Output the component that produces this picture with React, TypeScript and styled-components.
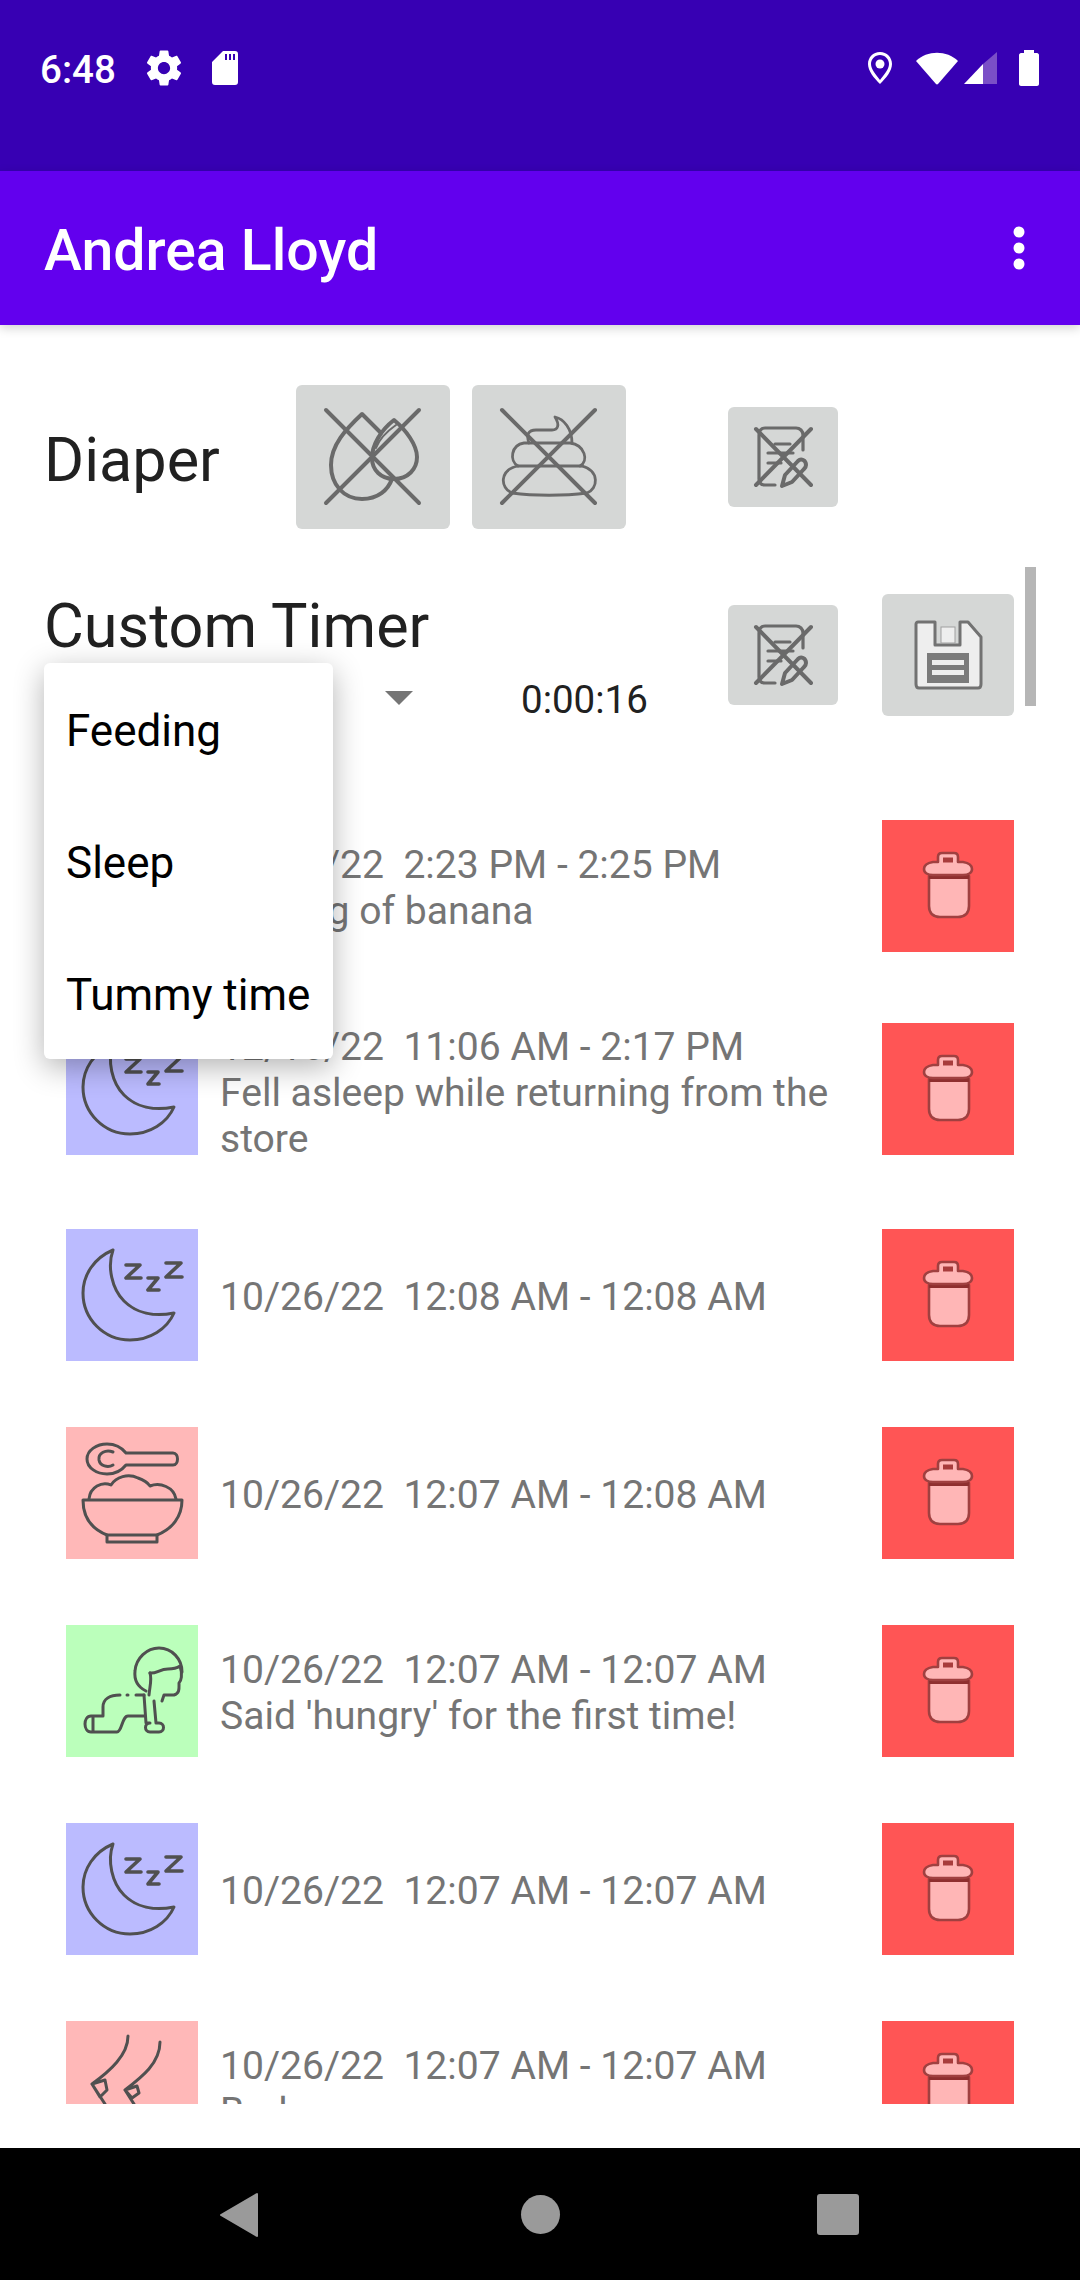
import React from 'react';
import styled, { createGlobalStyle } from 'styled-components';

const GlobalStyle = createGlobalStyle`
  html, body {
    margin: 0;
    padding: 0;
    background: #fff;
    font-family: Roboto, "Noto Sans", sans-serif;
  }
`;

const Screen = styled.div`
  position: relative;
  width: 1080px;
  height: 2280px;
  display: flex;
  flex-direction: column;
  overflow: hidden;
  background: #fff;
`;

const StatusBar = styled.div`
  height: 171px;
  flex: none;
  background: #3700b3;
  display: flex;
  align-items: flex-start;
  justify-content: space-between;
  padding: 50px 41px 0 40px;
  box-sizing: border-box;
  color: #fff;
`;

const StatusGroup = styled.div`
  height: 36px;
  display: flex;
  align-items: center;
`;

const Clock = styled.span`
  font-size: 38.5px;
  font-weight: 500;
  line-height: 36px;
  width: 103px;
  margin-top: 3px;
`;

const AppBar = styled.div`
  height: 154px;
  flex: none;
  background: #6200ee;
  display: flex;
  align-items: center;
  justify-content: space-between;
  padding: 0 41px 0 44px;
  box-sizing: border-box;
  box-shadow: 0 3px 10px rgba(0, 0, 0, 0.18);
  position: relative;
  z-index: 2;
`;

const AppTitle = styled.h1`
  margin: 5px 0 0;
  font-size: 57.2px;
  font-weight: 500;
  color: #fff;
`;

const Main = styled.main`
  flex: 1;
  position: relative;
  overflow: hidden;
`;

const DiaperRow = styled.section`
  display: flex;
  align-items: center;
  height: 144px;
  margin-top: 60px;
  padding-left: 44px;
`;

const SectionLabel = styled.h2`
  margin: 0;
  font-size: 61.2px;
  font-weight: 400;
  color: #212121;
  white-space: nowrap;
`;

const DiaperLabel = styled(SectionLabel)`
  width: 252px;
  margin-top: 5px;
`;

const IconButton = styled.div<{ $w: number; $h: number; $ml?: number }>`
  width: ${p => p.$w}px;
  height: ${p => p.$h}px;
  margin-left: ${p => p.$ml ?? 0}px;
  flex: none;
  background: #d5d7d6;
  border-radius: 6px;
  svg {
    display: block;
    width: 100%;
    height: 100%;
  }
`;

const TimerSection = styled.section`
  display: flex;
  align-items: flex-start;
  margin-top: 65px;
  padding-left: 44px;
  height: 122px;
`;

const TimerLeft = styled.div`
  width: 684px;
  flex: none;
  margin-top: -4px;
`;

const TimerControls = styled.div`
  display: flex;
  align-items: center;
  margin-top: 11px;
  height: 50px;
`;

const SpinnerArrow = styled.div`
  margin-left: 341px;
  width: 0;
  height: 0;
  border-left: 14px solid transparent;
  border-right: 14px solid transparent;
  border-top: 14px solid #757575;
`;

const TimerValue = styled.span`
  margin-left: 108px;
  margin-top: 3px;
  font-size: 38.5px;
  color: #212121;
`;

const EditHolder = styled.div`
  margin-top: 11px;
`;

const ScrollThumb = styled.div`
  position: absolute;
  left: 1025px;
  top: 242px;
  width: 11px;
  height: 139px;
  background: #b6b6b6;
`;

const List = styled.div`
  height: 1284px;
  margin-top: 104px;
  overflow: hidden;
  padding-left: 66px;
`;

const Row = styled.div<{ $height: number }>`
  display: flex;
  height: ${p => p.$height}px;
`;

const Tile = styled.div<{ $color: string }>`
  width: 132px;
  height: 132px;
  flex: none;
  background: ${p => p.$color};
  svg {
    display: block;
    width: 132px;
    height: 132px;
  }
`;

const RowText = styled.div<{ $nudge: number }>`
  width: 662px;
  height: 132px;
  flex: none;
  margin: ${p => p.$nudge}px 0 0 22px;
  display: flex;
  flex-direction: column;
  justify-content: center;
  font-size: 39.1px;
  line-height: 46px;
  color: #757575;
  white-space: pre-wrap;
`;

const Menu = styled.div`
  position: absolute;
  left: 44px;
  top: 338px;
  width: 289px;
  background: #fff;
  border-radius: 6px;
  box-shadow: 0 8px 30px rgba(0, 0, 0, 0.3);
  z-index: 3;
`;

const MenuItem = styled.div`
  height: 132px;
  box-sizing: border-box;
  display: flex;
  align-items: center;
  padding: 3px 0 0 22px;
  font-size: 44px;
  color: #000;
`;

const NavBar = styled.div`
  height: 132px;
  flex: none;
  background: #000;
  svg {
    display: block;
  }
`;

const LineIcon = styled.svg`
  fill: none;
  stroke: #6a6a6a;
  stroke-width: 4;
  stroke-linecap: round;
  stroke-linejoin: round;
`;

const TileIcon = styled.svg`
  fill: none;
  stroke: #505050;
  stroke-width: 3;
  stroke-linecap: round;
  stroke-linejoin: round;
`;

const MoonIcon = () => (
  <TileIcon viewBox="0 0 132 132">
    <path d="M47 21C28 29 17 46 17 64C17 90 38 111 64 111C84 111 101 100 108 84C88 88 70 84 58 72C46 60 41 38 47 21Z" />
    <path d="M60 36H74L60 49H75M82 49H92L82 61H93M100 34H115L100 48H116" strokeWidth="3.6" />
  </TileIcon>
);

const FoodIcon = () => (
  <TileIcon viewBox="0 0 132 132">
    <path d="M21 32C21 23 31 17 41 17C50 17 56 21 60 26H107C113 26 113 38 107 38H60C56 43 50 47 41 47C31 47 21 41 21 32Z" />
    <path d="M47 25C40 22 32 26 33 33C34 39 42 41 47 38" />
    <path d="M23 72C24 60 36 54 45 58C50 50 62 46 72 51C78 53 82 56 84 59C94 55 108 60 110 72" />
    <path d="M17 73H116C116 90 106 102 91 108H41C26 102 17 90 17 73Z" />
    <path d="M41 108V115H91V108" />
  </TileIcon>
);

const TummyIcon = () => (
  <TileIcon viewBox="0 0 132 132">
    <path d="M80 66C72 62 68 55 69 46C70 33 81 23 93 23C106 23 116 34 116 47" />
    <path d="M84 48C90 49 94 44 102 44C107 44 111 43 114 41C117 50 115 56 113 58C113 63 114 68 108 70H98L96 76" />
    <path d="M84 48C86 54 84 60 83 70" />
    <path d="M54 70C44 70 37 74 37 82V91H25C17 91 17 107 25 107H51C56 107 56 91 62 91H78" />
    <path d="M61 70H62M70 70H78" />
    <path d="M78 70L80 98H84C78 98 78 107 84 107H93C99 107 99 98 93 98H90L88 76" />
    <path d="M27 92V106" />
  </TileIcon>
);

const FeetIcon = () => (
  <TileIcon viewBox="0 0 132 132">
    <path d="M62 15C62 34 44 50 26 63L39 59L41 69L34 76L26 63L39 83L42 90" />
    <path d="M94 21C94 42 76 56 59 69L71 65L73 72L66 77L59 69L68 83L71 90" />
  </TileIcon>
);

const TrashIcon = () => (
  <svg viewBox="0 0 132 132">
    <g fill="#ffb6b6" stroke="#a04040" strokeWidth="2.6" strokeLinejoin="round">
      <path d="M47 56V86C47 94 52 97 58 97H76C82 97 87 94 87 86V56Z" />
      <path d="M47 57H87" stroke="#8f2f2f" strokeWidth="4" />
      <path d="M56 42V37C56 34 58 33 60 33H72C74 33 76 34 76 37V42H81C87 43 90 46 90 49C90 53 86 55 81 55H51C46 55 42 53 42 49C42 46 45 43 51 42Z" />
    </g>
    <rect x="61" y="37.500" width="10" height="5" fill="#a83c3c" />
  </svg>
);

const DropCrossIcon = () => (
  <LineIcon viewBox="0 0 154 144">
    <path d="M30 25L123 118M123 25L30 118" />
    <path d="M85 48L66 29C50 44 35 60 35 80C35 100 48 114 66 114C82 114 92 105 96 94" />
    <path d="M98 35C85 45 76 60 76 73C76 85 85 94 98 94C112 94 121 84 121 72C121 60 110 45 98 35Z" />
    <path d="M100 40C90 47 83 55 80 63" strokeWidth="2" />
  </LineIcon>
);

const PoopCrossIcon = () => (
  <LineIcon viewBox="0 0 154 144">
    <path d="M30 25L123 118M123 25L30 118" />
    <g strokeWidth="2.8">
      <path d="M40 108C62 111 92 111 115 108C126 104 128 86 110 81" />
      <path d="M40 108C28 103 27 85 46 81H110" />
      <path d="M46 81C37 76 39 60 52 58H98C113 60 117 76 108 81" />
      <path d="M57 58C54 50 56 45 64 45H80C86 45 88 40 83 32C92 34 100 44 100 58" />
    </g>
  </LineIcon>
);

const EditCrossIcon = () => (
  <LineIcon viewBox="0 0 110 100" strokeWidth={2.2}>
    <path d="M28 22L83 78M83 22L28 78" />
    <path d="M75 43V28C75 24 72 21 68 21H37C33 21 31 24 31 28V72C31 76 33 78 37 78H47" strokeWidth="3.2" />
    <path d="M47 37H62M40 46H65M40 56H53" strokeWidth="3.2" />
    <path d="M54 79L57 68L70 54C73 51 78 53 78 58C78 60 77 61 76 62L64 75Z" strokeWidth="4" />
  </LineIcon>
);

const SaveIcon = () => (
  <svg viewBox="0 0 132 122">
    <path d="M36 28H53V51H78V28H86L99 43V90C99 92 98 94 96 94H37C35 94 34 92 34 90V30C34 29 35 28 36 28Z" fill="#eee" stroke="#727272" strokeWidth="3" strokeLinejoin="round" />
    <rect x="59" y="33" width="14" height="16" fill="#eee" stroke="#a0a0a0" strokeWidth="1" />
    <rect x="45" y="59" width="42" height="30" fill="#7b7b7b" />
    <rect x="50" y="66" width="32" height="5" fill="#eee" />
    <rect x="50" y="76" width="32" height="5" fill="#eee" />
  </svg>
);

type Entry = {
  height: number;
  color: string;
  icon: React.ReactNode;
  text: string;
  nudge: number;
};

const SLEEP = '#bbbbff';
const FOOD = '#ffb8b8';
const TUMMY = '#bbffbb';

const entries: Entry[] = [
  { height: 203, color: FOOD, icon: <FoodIcon />, nudge: 2, text: '12/16/22  2:23 PM - 2:25 PM\nServing of banana' },
  { height: 206, color: SLEEP, icon: <MoonIcon />, nudge: 4, text: '12/16/22  11:06 AM - 2:17 PM\nFell asleep while returning from the store' },
  { height: 198, color: SLEEP, icon: <MoonIcon />, nudge: 2, text: '10/26/22  12:08 AM - 12:08 AM' },
  { height: 198, color: FOOD, icon: <FoodIcon />, nudge: 2, text: '10/26/22  12:07 AM - 12:08 AM' },
  { height: 198, color: TUMMY, icon: <TummyIcon />, nudge: 2, text: "10/26/22  12:07 AM - 12:07 AM\nSaid 'hungry' for the first time!" },
  { height: 198, color: SLEEP, icon: <MoonIcon />, nudge: 2, text: '10/26/22  12:07 AM - 12:07 AM' },
  { height: 198, color: FOOD, icon: <FeetIcon />, nudge: 2, text: '10/26/22  12:07 AM - 12:07 AM\nBad' },
];

export default function App() {
  return (
    <Screen>
      <GlobalStyle />
      <StatusBar>
        <StatusGroup>
          <Clock>6:48</Clock>
          <svg width="42" height="42" viewBox="0 0 24 24" fill="#fff">
            <path
              fillRule="evenodd"
              d="M19.43 12.98c.04-.32.07-.64.07-.98s-.03-.66-.07-.98l2.11-1.65c.19-.15.24-.42.12-.64l-2-3.46c-.12-.22-.39-.3-.61-.22l-2.49 1c-.52-.4-1.08-.73-1.69-.98l-.38-2.65C14.46 2.18 14.25 2 14 2h-4c-.25 0-.46.18-.49.42l-.38 2.65c-.61.25-1.17.59-1.69.98l-2.49-1c-.23-.09-.49 0-.61.22l-2 3.46c-.13.22-.07.49.12.64l2.11 1.65c-.04.32-.07.65-.07.98s.03.66.07.98l-2.11 1.65c-.19.15-.24.42-.12.64l2 3.46c.12.22.39.3.61.22l2.49-1c.52.4 1.08.73 1.69.98l.38 2.65c.03.24.24.42.49.42h4c.25 0 .46-.18.49-.42l.38-2.65c.61-.25 1.17-.59 1.69-.98l2.49 1c.23.09.49 0 .61-.22l2-3.46c.12-.22.07-.49-.12-.64l-2.11-1.65zM12 15.5c-1.93 0-3.5-1.57-3.5-3.5s1.57-3.5 3.5-3.5 3.5 1.57 3.5 3.5-1.57 3.5-3.5 3.5z"
            />
          </svg>
          <svg width="28" height="36" viewBox="0 0 28 36" style={{ marginLeft: 26 }}>
            <path
              fillRule="evenodd"
              fill="#fff"
              d="M12 1H24C26 1 27 2 27 4V32C27 34 26 35 24 35H4C2 35 1 34 1 32V12ZM14 4V10H16V4ZM18 4V10H20V4ZM22 4V10H24V4Z"
            />
          </svg>
        </StatusGroup>
        <StatusGroup>
          <svg width="26" height="34" viewBox="0 0 26 34">
            <path fillRule="evenodd" fill="#fff" d="M13 1C6 1 1 6.500 1 13C1 20 7 27 13 33C19 27 25 20 25 13C25 6.500 20 1 13 1ZM13 4C18 4 22 8 22 13C22 18 17 24 13 29C9 24 4 18 4 13C4 8 8 4 13 4Z" />
            <circle cx="13" cy="13" r="4.500" fill="#fff" />
          </svg>
          <svg width="44" height="34" viewBox="0 0 44 34" style={{ marginLeft: 22 }}>
            <path fill="#fff" d="M1 10C12 -1 32 -1 43 10L23 33C22.500 33.500 21.500 33.500 21 33Z" />
          </svg>
          <svg width="34" height="34" viewBox="0 0 34 34" style={{ marginLeft: 5 }}>
            <path fill="#7a4fc7" d="M19 13L33 1V33H19Z" />
            <path fill="#fff" d="M0 33L19 13V33Z" />
          </svg>
          <svg width="20" height="36" viewBox="0 0 20 36" style={{ marginLeft: 21 }}>
            <path fill="#fff" d="M5 0H15V3H18C19 3 20 4 20 5V34C20 35 19 36 18 36H2C1 36 0 35 0 34V5C0 4 1 3 2 3H5Z" />
          </svg>
        </StatusGroup>
      </StatusBar>

      <AppBar>
        <AppTitle>Andrea Lloyd</AppTitle>
        <svg width="12" height="44" viewBox="0 0 12 44" fill="#fff" style={{ marginRight: 14 }}>
          <circle cx="6" cy="6" r="5.500" />
          <circle cx="6" cy="22" r="5.500" />
          <circle cx="6" cy="38" r="5.500" />
        </svg>
      </AppBar>

      <Main>
        <DiaperRow>
          <DiaperLabel>Diaper</DiaperLabel>
          <IconButton $w={154} $h={144}><DropCrossIcon /></IconButton>
          <IconButton $w={154} $h={144} $ml={22}><PoopCrossIcon /></IconButton>
          <IconButton $w={110} $h={100} $ml={102}><EditCrossIcon /></IconButton>
        </DiaperRow>

        <TimerSection>
          <TimerLeft>
            <SectionLabel>Custom Timer</SectionLabel>
            <TimerControls>
              <SpinnerArrow />
              <TimerValue>0:00:16</TimerValue>
            </TimerControls>
          </TimerLeft>
          <EditHolder>
            <IconButton $w={110} $h={100}><EditCrossIcon /></IconButton>
          </EditHolder>
          <IconButton $w={132} $h={122} $ml={44}><SaveIcon /></IconButton>
        </TimerSection>

        <ScrollThumb />

        <List>
          {entries.map((entry, i) => (
            <Row key={i} $height={entry.height}>
              <Tile $color={entry.color}>{entry.icon}</Tile>
              <RowText $nudge={entry.nudge}>{entry.text}</RowText>
              <Tile $color="#ff5555"><TrashIcon /></Tile>
            </Row>
          ))}
        </List>

        <Menu>
          <MenuItem>Feeding</MenuItem>
          <MenuItem>Sleep</MenuItem>
          <MenuItem>Tummy time</MenuItem>
        </Menu>
      </Main>

      <NavBar>
        <svg width="1080" height="132" viewBox="0 0 1080 132">
          <path d="M221 67L257 46V88Z" fill="#9a9a9a" stroke="#9a9a9a" strokeWidth="2" strokeLinejoin="round" />
          <circle cx="540.500" cy="66.500" r="19.500" fill="#9a9a9a" />
          <rect x="817" y="46" width="42" height="41" rx="3" fill="#9a9a9a" />
        </svg>
      </NavBar>
    </Screen>
  );
}
